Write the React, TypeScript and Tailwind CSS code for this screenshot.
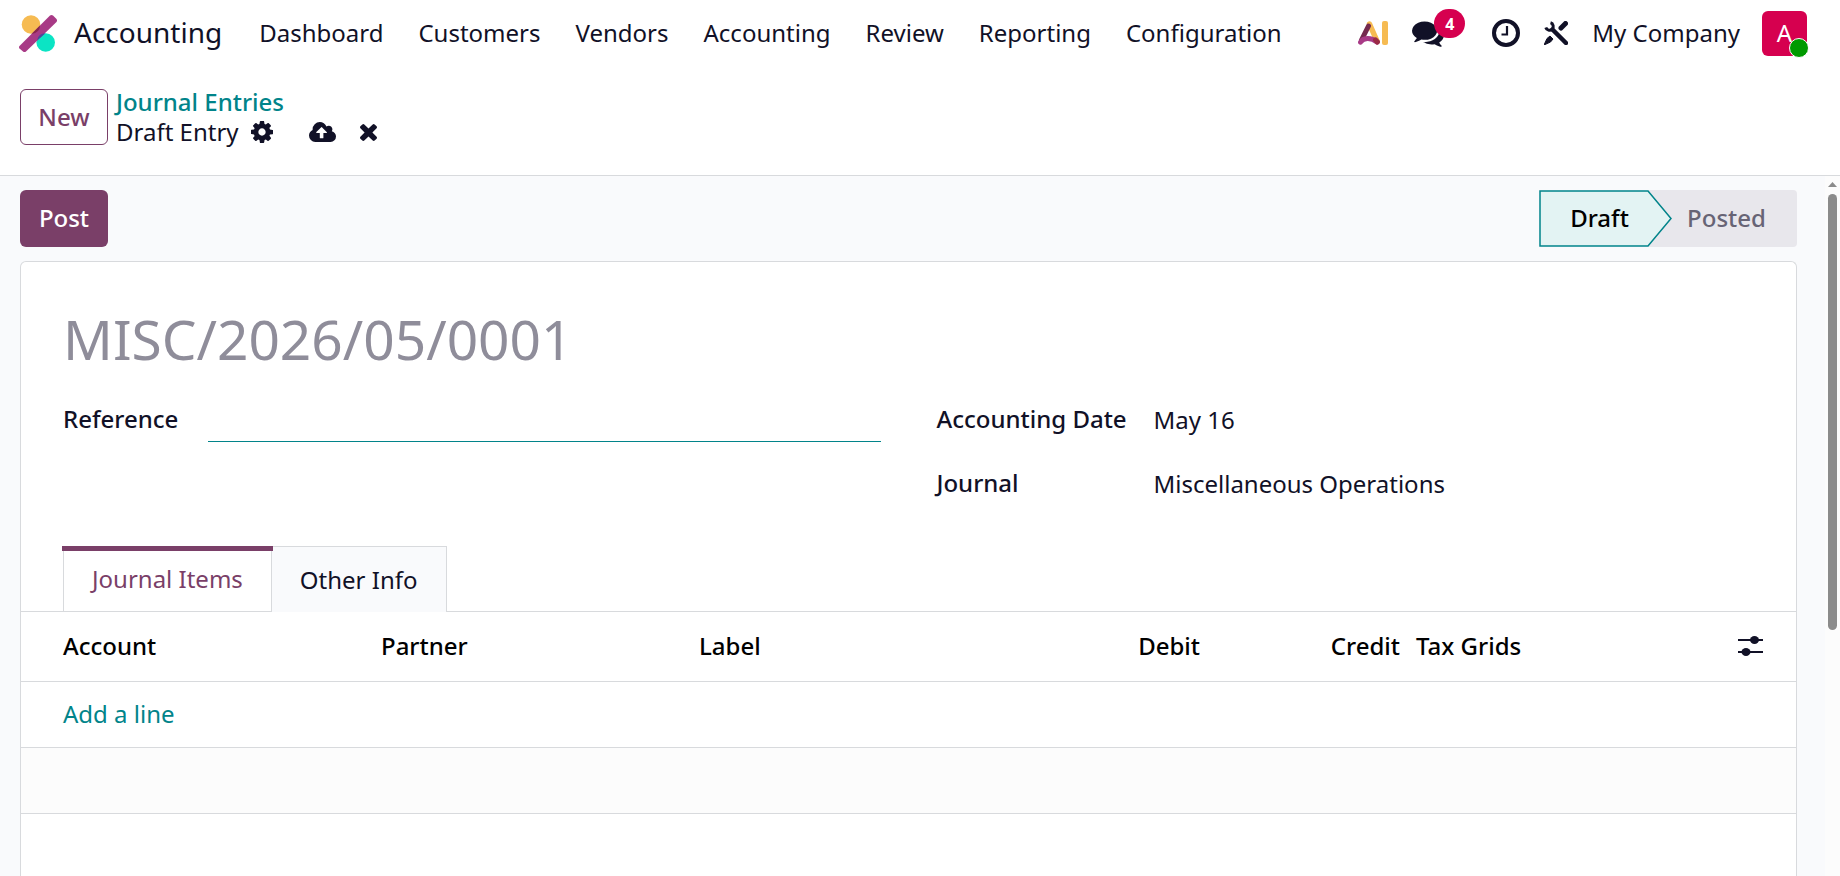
import React from "react";

const menus: string[] = ["Dashboard", "Customers", "Vendors", "Accounting", "Review", "Reporting", "Configuration"];

function AppLogo() {
  return (
    <svg className="size-10" viewBox="0 0 40 40" aria-hidden="true">
      <circle cx="14" cy="11.500" r="9.300" fill="#f6bb52" />
      <circle cx="28.700" cy="29.500" r="9.300" fill="#0be4c4" />
      <path d="M2.500 33 33 2.500Q34.500 1.500 36 2.500L39.500 6Q40.500 7.500 39.500 9L9 38.500Q7.500 39.500 6 38.500L2.500 35.500Q1.500 34.200 2.500 33z" fill="#a83a86" />
      <path d="M14.500 21 23 12.500Q23 19.500 14.500 21z" fill="#87264c" />
      <path d="M20 27.500 28.500 20.200Q21 20.500 20 27.500z" fill="#4a4a9a" />
    </svg>
  );
}

function AiIcon() {
  return (
    <svg className="h-6 w-[30px]" viewBox="0 0 30 24" fill="none" strokeLinecap="round" aria-hidden="true">
      <path d="M11.500 3 19 20" stroke="#f6bb52" strokeWidth="5.500" />
      <path d="M10.500 5 3.500 19" stroke="#742a4e" strokeWidth="5" />
      <path d="M2.600 21.200C5 16.500 13 16 19 21" stroke="#a83a86" strokeWidth="5" />
      <path d="M17.500 18.800 19.400 21" stroke="#9a2b45" strokeWidth="5" />
      <rect x="24" y="0" width="6" height="24" rx="2" fill="#f6bb52" />
    </svg>
  );
}

function CommentsIcon() {
  return (
    <svg className="size-8" viewBox="0 0 1792 1792" fill="currentColor" aria-hidden="true">
      <path d="M1408 768q0 139-94 257t-256.500 186.500T704 1280q-86 0-176-16-124 88-278 128-36 9-86 16h-3q-11 0-20.500-8t-11.500-21q-1-3-1-6.500t.5-6.500 2-6l2.500-5 3.500-5.500 4-5 4.500-5 4-4.500q5-6 23-25t26-29.500 22.500-29 25-38.500 20.500-44q-124-72-195-177T0 768q0-139 94-257t256.500-186.500T704 256t353.500 68.500T1314 511t94 257zm384 256q0 120-71 224.500T1526 1425q10 24 20.500 44t25 38.500 22.500 29 26 29.500 23 25q1 1 4 4.500t4.500 5 4 5 3.500 5.500l2.500 5 2 6 .5 6.500-1 6.500q-3 14-13 22t-22 7q-50-7-86-16-154-40-278-128-90 16-176 16-271 0-472-132 58 4 88 4 161 0 309-45t264-129q125-92 192-212t67-254q0-77-23-152 129 71 204 178t75 230z" />
    </svg>
  );
}

function ClockIcon() {
  return (
    <svg className="size-7" viewBox="0 0 28 28" fill="none" stroke="currentColor" aria-hidden="true">
      <circle cx="14" cy="14" r="12" strokeWidth="4" />
      <path d="M15 7v8.500H9.500" strokeWidth="2.200" />
    </svg>
  );
}

function ToolsIcon() {
  return (
    <svg className="size-6" viewBox="0 0 24 24" fill="none" stroke="currentColor" aria-hidden="true">
      <path d="M6.500 1.800A3.800 3.800 0 1 1 1.800 6.500" strokeWidth="3" />
      <path d="M8.500 8.500 22 22" strokeWidth="4.500" strokeLinecap="round" />
      <path d="M21.500 2.500 17 7" strokeWidth="5" strokeLinecap="round" />
      <path d="M0 24l3-6.500L6 15l3 3-2.500 3z" fill="currentColor" />
    </svg>
  );
}

function CogIcon() {
  return (
    <svg className="size-[22px]" viewBox="128 128 1536 1536" fill="currentColor" aria-hidden="true">
      <path d="M1152 896q0-106-75-181t-181-75-181 75-75 181 75 181 181 75 181-75 75-181zm512-109v222q0 12-8 23t-20 13l-185 28q-19 54-39 91 35 50 107 138 10 12 10 25t-9 23q-27 37-99 108t-94 71q-12 0-26-9l-138-108q-44 23-91 38-16 136-29 186-7 28-36 28H785q-14 0-24.500-8.500T749 1635l-28-184q-49-16-90-37l-141 107q-10 9-25 9-14 0-25-11-126-114-165-168-7-10-7-23 0-12 8-23 15-21 51-66.500t54-70.500q-27-50-41-99l-183-27q-13-2-21-12.500t-8-23.500V783q0-12 8-23t19-13l186-28q14-46 39-92-40-57-107-138-10-12-10-24 0-10 9-23 26-36 98.500-107.500T465 263q13 0 26 10l138 107q44-23 91-38 16-136 29-186 7-28 36-28h222q14 0 24.500 8.500T1043 157l28 184q49 16 90 37l142-107q9-9 24-9 13 0 25 10 129 119 165 170 7 8 7 22 0 12-8 23-15 21-51 66.500t-54 70.500q26 50 41 98l183 28q13 2 21 12.500t8 23.500z" />
    </svg>
  );
}

function CloudUploadIcon() {
  return (
    <svg className="h-5 w-[27px]" viewBox="0 0 1920 1408" fill="currentColor" aria-hidden="true">
      <path d="M1280 736q0-14-9-23L919 361q-9-9-23-9t-23 9L522 712q-10 12-10 24 0 14 9 23t23 9h224v352q0 13 9.500 22.500t22.500 9.500h192q13 0 22.500-9.500t9.500-22.500V768h224q13 0 22.500-9.500t9.500-22.500zm640 288q0 159-112.500 271.500T1536 1408H448q-185 0-316.500-131.500T0 960q0-130 70-240t188-165q-2-30-2-43 0-212 150-362T768 0q156 0 285.500 87T1242 318q71-62 166-62 106 0 181 75t75 181q0 76-41 138 130 31 213.500 135.500T1920 1024z" />
    </svg>
  );
}

function TimesIcon() {
  return (
    <svg className="size-[17px]" viewBox="302 366 1188 1188" fill="currentColor" aria-hidden="true">
      <path d="M1490 1322q0 40-28 68l-136 136q-28 28-68 28t-68-28l-294-294-294 294q-28 28-68 28t-68-28l-136-136q-28-28-28-68t28-68l294-294-294-294q-28-28-28-68t28-68l136-136q28-28 68-28t68 28l294 294 294-294q28-28 68-28t68 28l136 136q28 28 28 68t-28 68l-294 294 294 294q28 28 28 68z" />
    </svg>
  );
}

function SlidersIcon() {
  return (
    <svg className="h-6 w-7" viewBox="0 0 28 24" fill="currentColor" aria-hidden="true">
      <path d="M2 5h25v2H2zM2 17h25v2H2z" />
      <ellipse cx="18.500" cy="6" rx="4.500" ry="4" />
      <ellipse cx="10" cy="18" rx="4.500" ry="4" />
    </svg>
  );
}

function Navbar() {
  return (
    <header className="flex h-[67px] items-center justify-between pr-[33px] pb-px pl-[17px]">
      <nav className="flex items-center gap-[35px]" aria-label="Main">
        <a href="#home" className="mr-0.5 flex items-center gap-[17px] text-[28px]">
          <AppLogo />
          Accounting
        </a>
        {menus.map((m) => (
          <a key={m} href={"#" + m.toLowerCase()}>{m}</a>
        ))}
      </nav>
      <div className="flex items-center">
        <button type="button" aria-label="AI"><AiIcon /></button>
        <button type="button" aria-label="Messages" className="relative ml-6">
          <CommentsIcon />
          <span className="absolute -top-2 left-[22px] flex h-[29px] w-[31px] items-center justify-center rounded-full bg-[#d6004f] text-base font-bold text-white">4</span>
        </button>
        <button type="button" aria-label="Activities" className="ml-12"><ClockIcon /></button>
        <button type="button" aria-label="Tools" className="ml-6"><ToolsIcon /></button>
        <button type="button" className="ml-6">My Company</button>
        <button type="button" aria-label="Account" className="relative ml-[22px] flex size-[45px] items-center justify-center rounded-md bg-[#d6004f] text-white">
          A
          <span className="absolute -right-0.5 -bottom-0.5 size-5 rounded-full border border-white bg-[#009a00]" />
        </button>
      </div>
    </header>
  );
}

function ControlPanel() {
  return (
    <div className="flex h-[109px] items-start gap-2 border-b border-[#d8dadd] px-5 pt-[22px]">
      <button type="button" className="h-14 w-[88px] rounded-md border border-[#7a3f68] font-medium text-[#7a3f68]">New</button>
      <div className="-mt-0.5 flex flex-col leading-[30px]">
        <a href="#entries" className="font-medium text-[#01848a]">Journal Entries</a>
        <div className="flex items-center">
          <span>Draft Entry</span>
          <button type="button" aria-label="Actions" className="ml-3"><CogIcon /></button>
          <button type="button" aria-label="Save" className="ml-9"><CloudUploadIcon /></button>
          <button type="button" aria-label="Discard" className="ml-6"><TimesIcon /></button>
        </div>
      </div>
    </div>
  );
}

function StatusBar() {
  return (
    <div className="flex items-center justify-between py-[14px]">
      <button type="button" className="h-[57px] w-[88px] rounded-md bg-[#7a3f68] pb-0.5 font-medium text-white">Post</button>
      <div className="flex h-[57px] font-medium">
        <button type="button" aria-current="step" className="relative z-10 w-[133px] pr-3 pb-0.5 text-black">
          <svg className="absolute inset-0 -z-10 h-full w-full" viewBox="0 0 133 57" aria-hidden="true">
            <path d="M1 1H109L132 28.500 109 56H1z" fill="#e3f3f3" stroke="#01848a" strokeWidth="1.500" />
          </svg>
          Draft
        </button>
        <button type="button" className="-ml-6 w-[149px] rounded-r bg-[#e8e7ec] pb-0.5 pl-2 text-[#676475]">Posted</button>
      </div>
    </div>
  );
}

function EntryForm() {
  return (
    <div className="grid grid-cols-2 gap-14 px-[42px] pt-6">
      <div className="flex items-start">
        <label htmlFor="reference" className="w-[145px] leading-[42px] font-medium">Reference</label>
        <input id="reference" type="text" className="h-11 flex-1 border-b border-[#01848a] bg-transparent outline-none" />
      </div>
      <div className="grid grid-cols-[217px_1fr] gap-y-5 leading-[42px]">
        <label htmlFor="date" className="font-medium">Accounting Date</label>
        <input id="date" type="text" defaultValue="May 16" className="h-11 pb-0.5 outline-none" />
        <label htmlFor="journal" className="font-medium">Journal</label>
        <input id="journal" type="text" defaultValue="Miscellaneous Operations" className="h-11 pb-0.5 outline-none" />
      </div>
    </div>
  );
}

function Notebook() {
  return (
    <div className="pt-10">
      <div className="flex border-b border-[#d8dadd] px-[42px]" role="tablist">
        <button type="button" role="tab" aria-selected="true" className="relative h-[65px] border-x border-[#d8dadd] px-7 text-[#7a3f68]">
          <span className="absolute -inset-x-0.5 top-0 h-[5px] bg-[#7a3f68]" />
          Journal Items
        </button>
        <button type="button" role="tab" aria-selected="false" className="-mb-px h-[66px] border-t border-r border-[#d8dadd] bg-[#f9fafc] px-7">Other Info</button>
      </div>
      <table className="w-full table-fixed">
        <thead>
          <tr className="h-[69px] border-b border-[#d8dadd] text-black">
            <th scope="col" className="w-[352px] pl-[42px] text-left font-medium">Account</th>
            <th scope="col" className="w-[318px] pl-2 text-left font-medium">Partner</th>
            <th scope="col" className="w-[318px] pl-2 text-left font-medium">Label</th>
            <th scope="col" className="pr-2 text-right font-medium">Debit</th>
            <th scope="col" className="w-[200px] pr-2 text-right font-medium">Credit</th>
            <th scope="col" className="w-[200px] pl-2 text-left font-medium">Tax Grids</th>
            <th scope="col" className="w-[188px] pr-8">
              <button type="button" aria-label="Columns" className="ml-auto block text-[#111127]"><SlidersIcon /></button>
            </th>
          </tr>
        </thead>
        <tbody>
          <tr className="h-[66px] border-b border-[#d8dadd]">
            <td colSpan={7} className="pl-[42px]"><a href="#add" className="text-[#01848a]">Add a line</a></td>
          </tr>
          <tr className="h-[66px] border-b border-[#d8dadd] bg-[#fcfcfc]"><td colSpan={7} /></tr>
        </tbody>
      </table>
    </div>
  );
}

export default function App() {
  return (
    <div className="flex h-screen flex-col overflow-hidden bg-white font-['Noto_Sans',sans-serif] text-2xl text-[#111127]">
      <Navbar />
      <ControlPanel />
      <div className="flex min-h-0 flex-1 bg-[#f9fafc]">
        <main className="flex min-w-0 flex-1 flex-col pr-7 pl-5">
          <StatusBar />
          <section className="flex-1 rounded-t-md border border-b-0 border-[#d8dadd] bg-white">
            <h1 className="px-[42px] pt-[42px] text-[55px] leading-[70px] text-[#8f8d9a]">MISC/2026/05/0001</h1>
            <EntryForm />
            <Notebook />
          </section>
        </main>
        <div className="flex w-[15px] flex-col items-center bg-[#fcfcfc] pt-[6px]" aria-hidden="true">
          <svg className="h-[5px] w-[9px]" viewBox="0 0 9 5"><path d="M0 5 4.500 0 9 5z" fill="#8b8b8b" /></svg>
          <div className="mt-[7px] h-[436px] w-[9px] rounded-full bg-[#8b8b8b]" />
        </div>
      </div>
    </div>
  );
}
